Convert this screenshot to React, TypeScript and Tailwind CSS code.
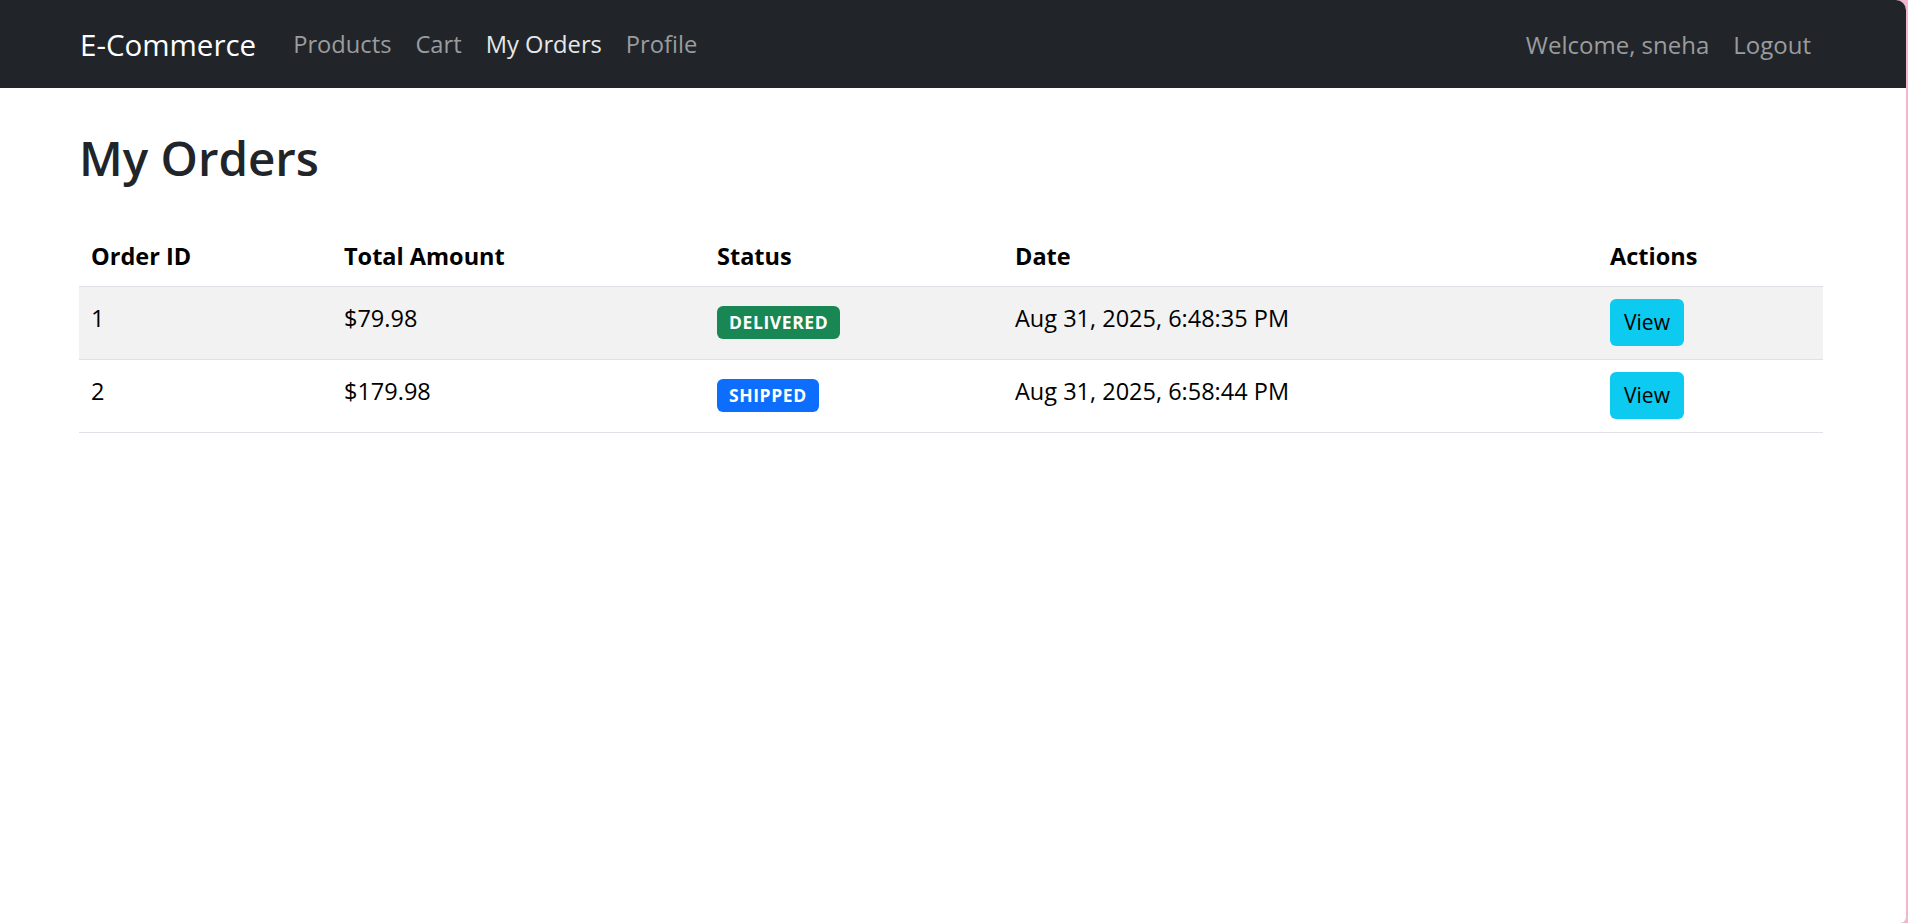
const orders = [
  { id: 1, total: "$79.98", status: "DELIVERED", date: "Aug 31, 2025, 6:48:35 PM" },
  { id: 2, total: "$179.98", status: "SHIPPED", date: "Aug 31, 2025, 6:58:44 PM" },
];

const font = { fontFamily: '"Open Sans", "Noto Sans", sans-serif' };

function StatusBadge({ status }: { status: string }) {
  const color = status === "DELIVERED" ? "bg-[#198754]" : "bg-[#0d6efd]";
  return (
    <span
      className={`inline-block rounded-[6px] px-[12px] py-[7.5px] text-[17.5px] font-bold leading-none tracking-[0.6px] text-white ${color}`}
    >
      {status}
    </span>
  );
}

export default function App() {
  return (
    <div className="flex min-h-[923px] w-full bg-[#f4b6cc]" style={font}>
      <div className="flex min-h-[923px] flex-1 flex-col overflow-hidden rounded-tr-[10px] rounded-br-[6px] bg-white">
        <nav className="flex h-[88px] items-center bg-[#212529] pt-[2px] pl-[80px] pr-[83px]">
          <a className="mr-[25px] text-[29.5px] text-white">E-Commerce</a>
          <ul className="flex items-center text-[23.7px]">
            <li className="px-[12px] text-[#9a9c9e]">Products</li>
            <li className="px-[12px] text-[#9a9c9e]">Cart</li>
            <li className="px-[12px] text-[#e6e7e8]">My Orders</li>
            <li className="px-[12px] text-[#9a9c9e]">Profile</li>
          </ul>
          <ul className="ml-auto flex items-center text-[24px] text-[#9a9c9e]">
            <li className="px-[12px]">Welcome, sneha</li>
            <li className="px-[12px]">Logout</li>
          </ul>
        </nav>

        <main className="pl-[79px] pr-[83px]">
          <h1 className="mt-[41px] mb-[40px] text-[47.5px] font-semibold leading-[1.2] text-[#212529]">
            My Orders
          </h1>

          <table className="w-full table-fixed border-collapse text-left text-[23.5px] leading-[36px] text-black">
            <colgroup>
              <col className="w-[253px]" />
              <col className="w-[373px]" />
              <col className="w-[298px]" />
              <col className="w-[595px]" />
              <col />
            </colgroup>
            <thead>
              <tr className="border-b border-[#dee2e6]">
                <th className="p-[12px] font-bold">Order ID</th>
                <th className="p-[12px] font-bold">Total Amount</th>
                <th className="p-[12px] font-bold">Status</th>
                <th className="p-[12px] font-bold">Date</th>
                <th className="p-[12px] font-bold">Actions</th>
              </tr>
            </thead>
            <tbody>
              {orders.map((o, i) => (
                <tr
                  key={o.id}
                  className={`h-[73px] border-b border-[#dee2e6] align-top ${i % 2 === 0 ? "bg-[#f2f2f2]" : "bg-white"}`}
                >
                  <td className="p-[12px] pt-[13px]">{o.id}</td>
                  <td className="p-[12px] pt-[13px]">{o.total}</td>
                  <td className="p-[12px]">
                    <div className="pt-[7px] leading-none">
                      <StatusBadge status={o.status} />
                    </div>
                  </td>
                  <td className="p-[12px] pt-[13px]">{o.date}</td>
                  <td className="p-[12px]">
                    <button className="h-[47px] w-[74px] rounded-[6px] bg-[#0dcaf0] text-[21px] leading-none text-black">
                      View
                    </button>
                  </td>
                </tr>
              ))}
            </tbody>
          </table>
        </main>
      </div>
      <div className="w-[2px]" />
    </div>
  );
}
